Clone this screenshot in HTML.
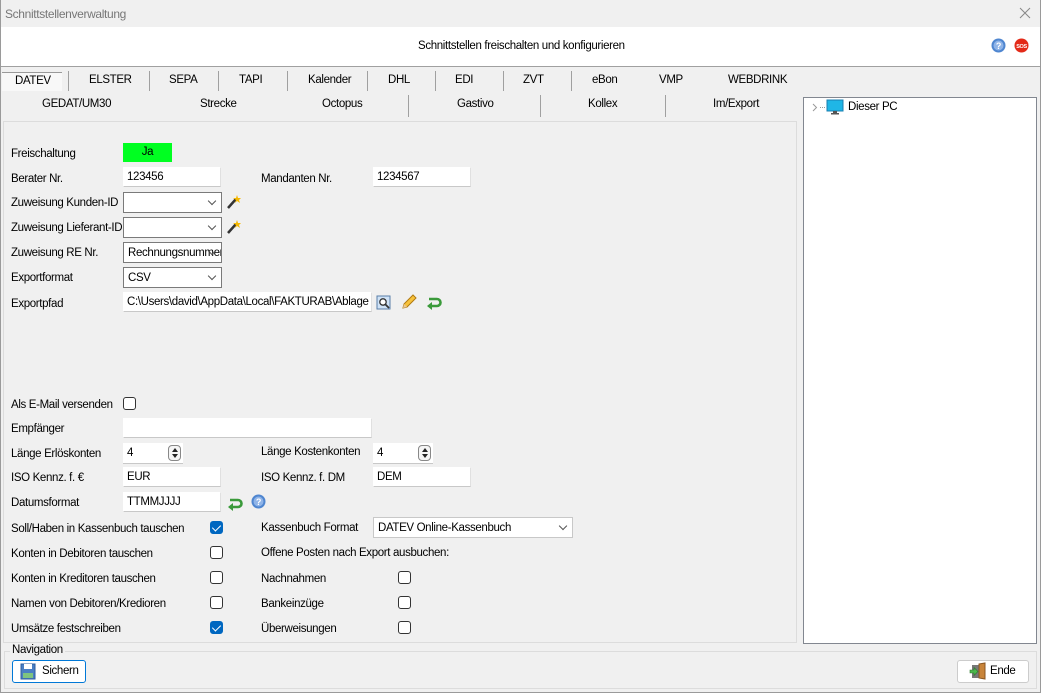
<!DOCTYPE html>
<html><head><meta charset="utf-8"><style>
*{box-sizing:border-box;margin:0;padding:0}
body{width:1041px;height:693px;overflow:hidden;background:#f0f0f0;font-family:"Liberation Sans","DejaVu Sans",sans-serif;font-size:11.5px;color:#000;position:relative;letter-spacing:-0.35px}
.a{position:absolute;white-space:nowrap}
.l{position:absolute;white-space:nowrap;line-height:14px}
.in{position:absolute;background:#fff;border:1px solid #fff;border-bottom:1px solid #c8c8c8;border-right:1px solid #e0e0e0;height:20px;padding:2px 3px;line-height:14px;overflow:hidden;white-space:nowrap}
.cb{position:absolute;background:#fff;border:1px solid #7a7a7a;height:21px;padding:3px 4px;line-height:14px;white-space:nowrap;overflow:hidden}
.cb:after{content:"";position:absolute;right:6px;top:5px;width:5px;height:5px;border-right:1px solid #555;border-bottom:1px solid #555;transform:rotate(45deg)}
.chk{position:absolute;width:13px;height:13px;border:1px solid #333;border-radius:3px;background:#fff}
.chk.on{background:#0067c0;border-color:#0067c0}
.chk.on:after{content:"";position:absolute;left:3px;top:1px;width:4px;height:7px;border-right:1px solid #fff;border-bottom:1px solid #fff;transform:rotate(45deg)}
.sep{position:absolute;width:1px;background:#a0a0a0}
.sp{position:absolute;background:#fff;height:21px;width:60px;border-bottom:1px solid #c8c8c8;padding:3px 4px;line-height:14px}
.sp i{position:absolute;right:2px;top:2px;width:13px;height:16px;border:1px solid #888;border-radius:4px;background:#f5f5f5}
.sp i:before{content:"";position:absolute;left:3px;top:2px;border-left:3px solid transparent;border-right:3px solid transparent;border-bottom:4px solid #222}
.sp i:after{content:"";position:absolute;left:3px;bottom:2px;border-left:3px solid transparent;border-right:3px solid transparent;border-top:4px solid #222}
</style></head><body>
<div class="a" style="left:0;top:0;width:1041px;height:693px;border:1px solid #9a9a9a;border-top:none"></div>
<div class="a" style="left:5px;top:7px;color:#777;font-size:12px">Schnittstellenverwaltung</div>
<svg class="a" style="left:1019px;top:7px" width="12" height="12"><path d="M1 1 L11 11 M11 1 L1 11" stroke="#888" stroke-width="1"/></svg>
<div class="a" style="left:1px;top:27px;width:1039px;height:40px;background:#fff;border-bottom:1px solid #a0a0a0"></div>
<div class="a" style="left:418px;top:40px">Schnittstellen freischalten und konfigurieren</div>
<svg class="a" style="left:991px;top:38px" width="15" height="15"><circle cx="7.5" cy="7.5" r="7" fill="#4f86d0"/><circle cx="7.5" cy="7.5" r="5" fill="#8fb4e8"/><text x="7.5" y="11" font-size="9" font-weight="bold" fill="#fff" text-anchor="middle" font-family="Liberation Sans">?</text></svg>
<svg class="a" style="left:1014px;top:38px" width="15" height="15"><circle cx="7.5" cy="7.5" r="7" fill="#e32a18"/><text x="7.5" y="10" font-size="5.5" font-weight="bold" fill="#fff" text-anchor="middle" font-family="Liberation Sans">SOS</text></svg>

<div class="a" style="left:2px;top:72px;width:60px;height:19px;background:#f8f8f8;border-top:1px solid #999"></div>
<div class="a" style="left:15px;top:75px">DATEV</div>
<div class="sep" style="left:68px;top:71px;height:20px"></div>
<div class="a" style="left:89px;top:74px">ELSTER</div>
<div class="sep" style="left:149px;top:71px;height:20px"></div>
<div class="a" style="left:169px;top:74px">SEPA</div>
<div class="sep" style="left:218px;top:71px;height:20px"></div>
<div class="a" style="left:239px;top:74px">TAPI</div>
<div class="sep" style="left:287px;top:71px;height:20px"></div>
<div class="a" style="left:308px;top:74px">Kalender</div>
<div class="sep" style="left:367px;top:71px;height:20px"></div>
<div class="a" style="left:388px;top:74px">DHL</div>
<div class="sep" style="left:435px;top:71px;height:20px"></div>
<div class="a" style="left:455px;top:74px">EDI</div>
<div class="sep" style="left:503px;top:71px;height:20px"></div>
<div class="a" style="left:523px;top:74px">ZVT</div>
<div class="sep" style="left:571px;top:71px;height:20px"></div>
<div class="a" style="left:592px;top:74px">eBon</div>
<div class="a" style="left:659px;top:74px">VMP</div>
<div class="a" style="left:728px;top:74px">WEBDRINK</div>

<div class="a" style="left:42px;top:98px">GEDAT/UM30</div>
<div class="a" style="left:200px;top:98px">Strecke</div>
<div class="a" style="left:322px;top:98px">Octopus</div>
<div class="sep" style="left:408px;top:95px;height:22px"></div>
<div class="a" style="left:457px;top:98px">Gastivo</div>
<div class="sep" style="left:540px;top:95px;height:22px"></div>
<div class="a" style="left:588px;top:98px">Kollex</div>
<div class="sep" style="left:665px;top:95px;height:22px"></div>
<div class="a" style="left:713px;top:98px">Im/Export</div>

<div class="a" style="left:3px;top:121px;width:794px;height:522px;border:1px solid #dcdcdc"></div>
<div class="a" style="left:803px;top:97px;width:234px;height:547px;background:#fff;border:1px solid #828790"></div>
<svg class="a" style="left:812px;top:103px" width="6" height="9"><path d="M1 1 L4.5 4.5 L1 8" fill="none" stroke="#999"/></svg>
<div class="a" style="left:820px;top:107px;width:5px;border-top:1px dotted #999"></div>
<svg class="a" style="left:826px;top:99px" width="18" height="16"><rect x="1" y="1" width="16" height="11" fill="#1fb6e6" stroke="#1a7fb0"/><rect x="7" y="12" width="4" height="2" fill="#555"/><rect x="5" y="14" width="8" height="1.5" fill="#555"/></svg>
<div class="a" style="left:848px;top:101px">Dieser PC</div>

<div class="l" style="left:11px;top:147px">Freischaltung</div>
<div class="a" style="left:123px;top:143px;width:49px;height:19px;background:#00ff21;text-align:center;line-height:19px">Ja</div>
<div class="l" style="left:11px;top:172px">Berater Nr.</div>
<div class="in" style="left:123px;top:167px;width:98px">123456</div>
<div class="l" style="left:261px;top:172px">Mandanten Nr.</div>
<div class="in" style="left:373px;top:167px;width:98px">1234567</div>
<div class="l" style="left:11px;top:196px">Zuweisung Kunden-ID</div>
<div class="cb" style="left:123px;top:192px;width:99px"></div>
<div class="l" style="left:11px;top:221px">Zuweisung Lieferant-ID</div>
<div class="cb" style="left:123px;top:217px;width:99px"></div>
<svg class="a" style="left:226px;top:194px" width="16" height="16"><line x1="2" y1="14" x2="10" y2="5" stroke="#333" stroke-width="2.5"/><path d="M11 1 L12 4 L15 4 L13 6 L14 9 L11 7 L9 9 L10 6 L7 4 L10 4Z" fill="#f5b800"/></svg>
<svg class="a" style="left:226px;top:219px" width="16" height="16"><line x1="2" y1="14" x2="10" y2="5" stroke="#333" stroke-width="2.5"/><path d="M11 1 L12 4 L15 4 L13 6 L14 9 L11 7 L9 9 L10 6 L7 4 L10 4Z" fill="#f5b800"/></svg>
<div class="l" style="left:11px;top:246px">Zuweisung RE Nr.</div>
<div class="cb" style="left:123px;top:242px;width:99px;padding-right:18px">Rechnungsnummer</div>
<div class="l" style="left:11px;top:271px">Exportformat</div>
<div class="cb" style="left:123px;top:267px;width:99px">CSV</div>
<div class="l" style="left:11px;top:297px">Exportpfad</div>
<div class="in" style="left:123px;top:292px;width:249px">C:\Users\david\AppData\Local\FAKTURAB\Ablage</div>
<svg class="a" style="left:376px;top:295px" width="16" height="16"><rect x="1" y="1" width="13" height="13" fill="#cfe2f6" stroke="#5a7ea8"/><circle cx="7" cy="7" r="3.2" fill="#fff" stroke="#333" stroke-width="1.3"/><line x1="9.5" y1="9.5" x2="13" y2="13" stroke="#333" stroke-width="1.8"/></svg>
<svg class="a" style="left:401px;top:294px" width="16" height="16"><path d="M2 14 L3 10 L12 1 L15 4 L6 13Z" fill="#f7c23c" stroke="#b07a10"/><path d="M2 14 L3 10 L6 13Z" fill="#e8c89a"/></svg>
<svg class="a" style="left:426px;top:294px" width="16" height="16"><path d="M3 5 H11 A3.5 3.5 0 0 1 11 12 H5" fill="none" stroke="#3a9a3a" stroke-width="2.6"/><path d="M1 12 L6 8 L6 16Z" fill="#3a9a3a"/></svg>

<div class="l" style="left:11px;top:398px">Als E-Mail versenden</div>
<div class="chk" style="left:123px;top:397px"></div>
<div class="l" style="left:11px;top:422px">Empfänger</div>
<div class="in" style="left:123px;top:418px;width:249px"></div>
<div class="l" style="left:11px;top:447px">Länge Erlöskonten</div>
<div class="sp" style="left:123px;top:443px">4<i></i></div>
<div class="l" style="left:261px;top:445px">Länge Kostenkonten</div>
<div class="sp" style="left:373px;top:443px">4<i></i></div>
<div class="l" style="left:11px;top:471px">ISO Kennz. f. €</div>
<div class="in" style="left:123px;top:467px;width:98px">EUR</div>
<div class="l" style="left:261px;top:471px">ISO Kennz. f. DM</div>
<div class="in" style="left:373px;top:467px;width:98px">DEM</div>
<div class="l" style="left:11px;top:496px">Datumsformat</div>
<div class="in" style="left:123px;top:492px;width:98px">TTMMJJJJ</div>
<svg class="a" style="left:227px;top:495px" width="16" height="16"><path d="M3 5 H11 A3.5 3.5 0 0 1 11 12 H5" fill="none" stroke="#3a9a3a" stroke-width="2.6"/><path d="M1 12 L6 8 L6 16Z" fill="#3a9a3a"/></svg>
<svg class="a" style="left:251px;top:494px" width="15" height="15"><circle cx="7.5" cy="7.5" r="7" fill="#4f86d0"/><circle cx="7.5" cy="7.5" r="5" fill="#8fb4e8"/><text x="7.5" y="11" font-size="9" font-weight="bold" fill="#fff" text-anchor="middle" font-family="Liberation Sans">?</text></svg>

<div class="l" style="left:11px;top:522px">Soll/Haben in Kassenbuch tauschen</div>
<div class="chk on" style="left:210px;top:521px"></div>
<div class="l" style="left:261px;top:521px">Kassenbuch Format</div>
<div class="cb" style="left:373px;top:517px;width:200px;border-color:#c8c8c8">DATEV Online-Kassenbuch</div>
<div class="l" style="left:11px;top:547px">Konten in Debitoren tauschen</div>
<div class="chk" style="left:210px;top:546px"></div>
<div class="l" style="left:261px;top:546px">Offene Posten nach Export ausbuchen:</div>
<div class="l" style="left:11px;top:572px">Konten in Kreditoren tauschen</div>
<div class="chk" style="left:210px;top:571px"></div>
<div class="l" style="left:261px;top:572px">Nachnahmen</div>
<div class="chk" style="left:398px;top:571px"></div>
<div class="l" style="left:11px;top:597px">Namen von Debitoren/Kredioren</div>
<div class="chk" style="left:210px;top:596px"></div>
<div class="l" style="left:261px;top:597px">Bankeinzüge</div>
<div class="chk" style="left:398px;top:596px"></div>
<div class="l" style="left:11px;top:622px">Umsätze festschreiben</div>
<div class="chk on" style="left:210px;top:621px"></div>
<div class="l" style="left:261px;top:622px">Überweisungen</div>
<div class="chk" style="left:398px;top:621px"></div>

<div class="a" style="left:4px;top:651px;width:1033px;height:38px;border:1px solid #dcdcdc"></div>
<div class="a" style="left:10px;top:644px;padding:0 2px;background:#f0f0f0">Navigation</div>
<div class="a" style="left:12px;top:660px;width:74px;height:23px;background:#fff;border:1px solid #0078d7;border-radius:3px"></div>
<svg class="a" style="left:20px;top:663px" width="16" height="17"><rect x="1" y="1" width="14" height="15" fill="#4a7fc4" stroke="#2f5e9e"/><rect x="4" y="1" width="8" height="5" fill="#fff"/><rect x="3" y="10" width="10" height="5" fill="#7fc47f"/></svg>
<div class="a" style="left:42px;top:665px">Sichern</div>
<div class="a" style="left:957px;top:660px;width:72px;height:23px;background:#fff;border:1px solid #ccc;border-radius:3px"></div>
<svg class="a" style="left:969px;top:662px" width="18" height="18"><rect x="3" y="3" width="9" height="13" fill="#777"/><path d="M10 2 L16 1 L16 17 L10 16Z" fill="#c8843a" stroke="#8a5520"/><path d="M1 8 H5 V5.5 L9 9.5 L5 13.5 V11 H1Z" fill="#4cb84c" stroke="#2a7a2a" stroke-width="0.6"/></svg>
<div class="a" style="left:990px;top:665px">Ende</div>
</body></html>
